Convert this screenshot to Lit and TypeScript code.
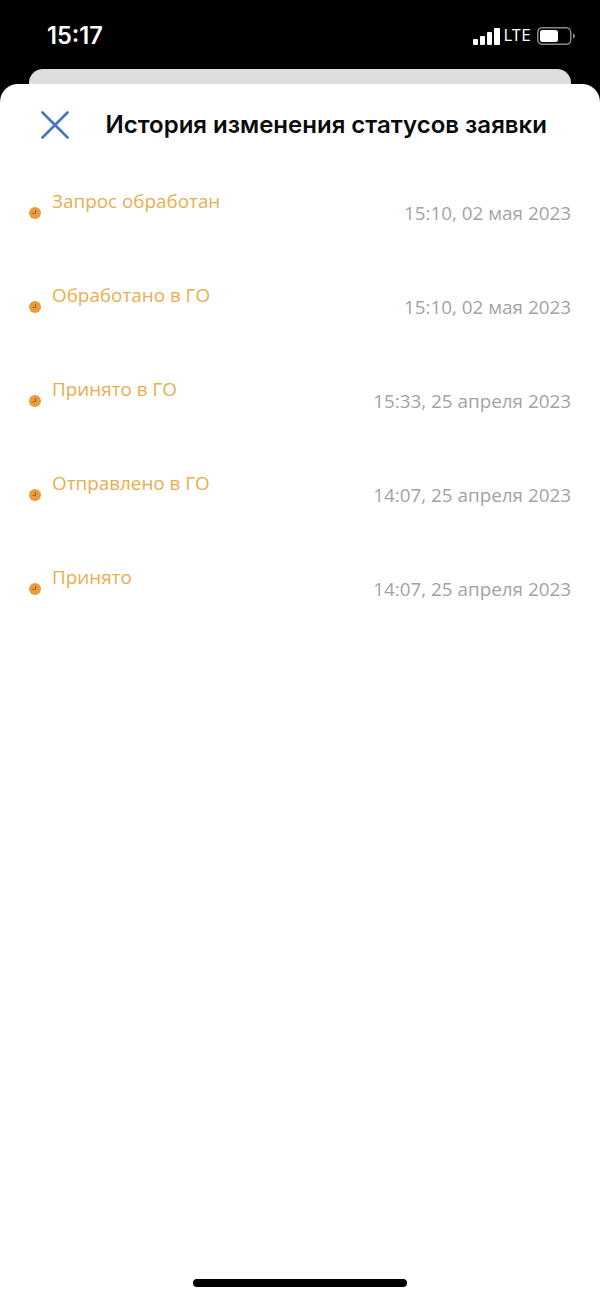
import { LitElement, html, css } from "lit";
import { customElement } from "lit/decorators.js";

const ROWS = [
  ["Запрос обработан", "15:10, 02 мая 2023"],
  ["Обработано в ГО", "15:10, 02 мая 2023"],
  ["Принято в ГО", "15:33, 25 апреля 2023"],
  ["Отправлено в ГО", "14:07, 25 апреля 2023"],
  ["Принято", "14:07, 25 апреля 2023"],
];

@customElement("app-root")
export class AppRoot extends LitElement {
  static styles = css`
    :host { display: block; width: 600px; height: 1297px; background: #000; overflow: hidden; font-family: "Open Sans", sans-serif; }
    .status { height: 69px; display: flex; justify-content: space-between; align-items: flex-start; box-sizing: border-box; padding: 22px 25px 0 47px; color: #fff; }
    .time { font: 600 23.6px/28px Inter, sans-serif; }
    .sys { display: flex; align-items: center; gap: 4px; height: 28px; }
    .lte { font: 400 15.5px/28px Inter, sans-serif; letter-spacing: 0.2px; margin-right: 2px; }
    .back { height: 15px; margin: 0 29px; background: #dedede; border-radius: 14px 14px 0 0; }
    .sheet { height: 1213px; background: #fff; border-radius: 18px 18px 0 0; position: relative; box-sizing: border-box; padding-top: 23px; }
    .head { display: flex; align-items: center; height: 36px; padding-left: 41px; gap: 36.500px; }
    .head svg { display: block; flex: none; }
    .title { font: 600 24px/36px Inter, sans-serif; color: #0a0a0a; white-space: nowrap; }
    .list { display: flex; flex-direction: column; margin-top: 44px; padding: 0 29px; gap: 50px; }
    .row { display: flex; height: 44px; align-items: flex-start; }
    .dot { flex: none; width: 12px; height: 12px; margin-top: 20px; margin-right: 11px; display: block; }
    .label { flex: 1; font-size: 18.850px; line-height: 26px; color: #e8ae50; margin-top: 0.500px; }
    .date { font-size: 18.850px; line-height: 26px; color: #a3a3a3; margin-top: 13px; white-space: nowrap; }
    .home { position: absolute; left: 193px; bottom: 10.500px; width: 214px; height: 7.500px; border-radius: 4px; background: #000; }
  `;

  render() {
    return html`
      <div class="status">
        <div class="time">15:17</div>
        <div class="sys">
          <svg width="27" height="17" viewBox="0 0 27 17" fill="#fff">
            <rect x="0" y="11" width="5" height="6" rx="1"/>
            <rect x="7" y="8" width="5" height="9" rx="1"/>
            <rect x="14" y="4" width="5" height="13" rx="1"/>
            <rect x="21" y="0" width="6" height="17" rx="1"/>
          </svg>
          <div class="lte">LTE</div>
          <svg width="38" height="18" viewBox="0 0 38 18">
            <rect x="0.75" y="0.75" width="33" height="16.5" rx="4.5" fill="none" stroke="#8a8a8a" stroke-width="1.5"/>
            <rect x="3" y="3" width="18" height="12" rx="2.5" fill="#fff"/>
            <path d="M36 6.500c1.200.4 2 1.400 2 2.500s-.8 2.100-2 2.500z" fill="#8a8a8a"/>
          </svg>
        </div>
      </div>
      <div class="back"></div>
      <div class="sheet">
        <div class="head">
          <svg width="28" height="28" viewBox="0 0 28 28" fill="none" stroke="#4a72bd" stroke-width="2.600" stroke-linecap="round">
            <path d="M1.500 1.500l25 25M26.500 1.500l-25 25"/>
          </svg>
          <div class="title">История изменения статусов заявки</div>
        </div>
        <div class="list">
          ${ROWS.map(([l, d]) => html`
            <div class="row">
              <svg class="dot" viewBox="0 0 12 12">
                <circle cx="6" cy="6" r="6" fill="#ea9a3f"/>
                <path d="M6.500 3v3.500H3.500" fill="none" stroke="#a86a20" stroke-width="1.200"/>
              </svg>
              <div class="label">${l}</div>
              <div class="date">${d}</div>
            </div>`)}
        </div>
        <div class="home"></div>
      </div>
    `;
  }
}
